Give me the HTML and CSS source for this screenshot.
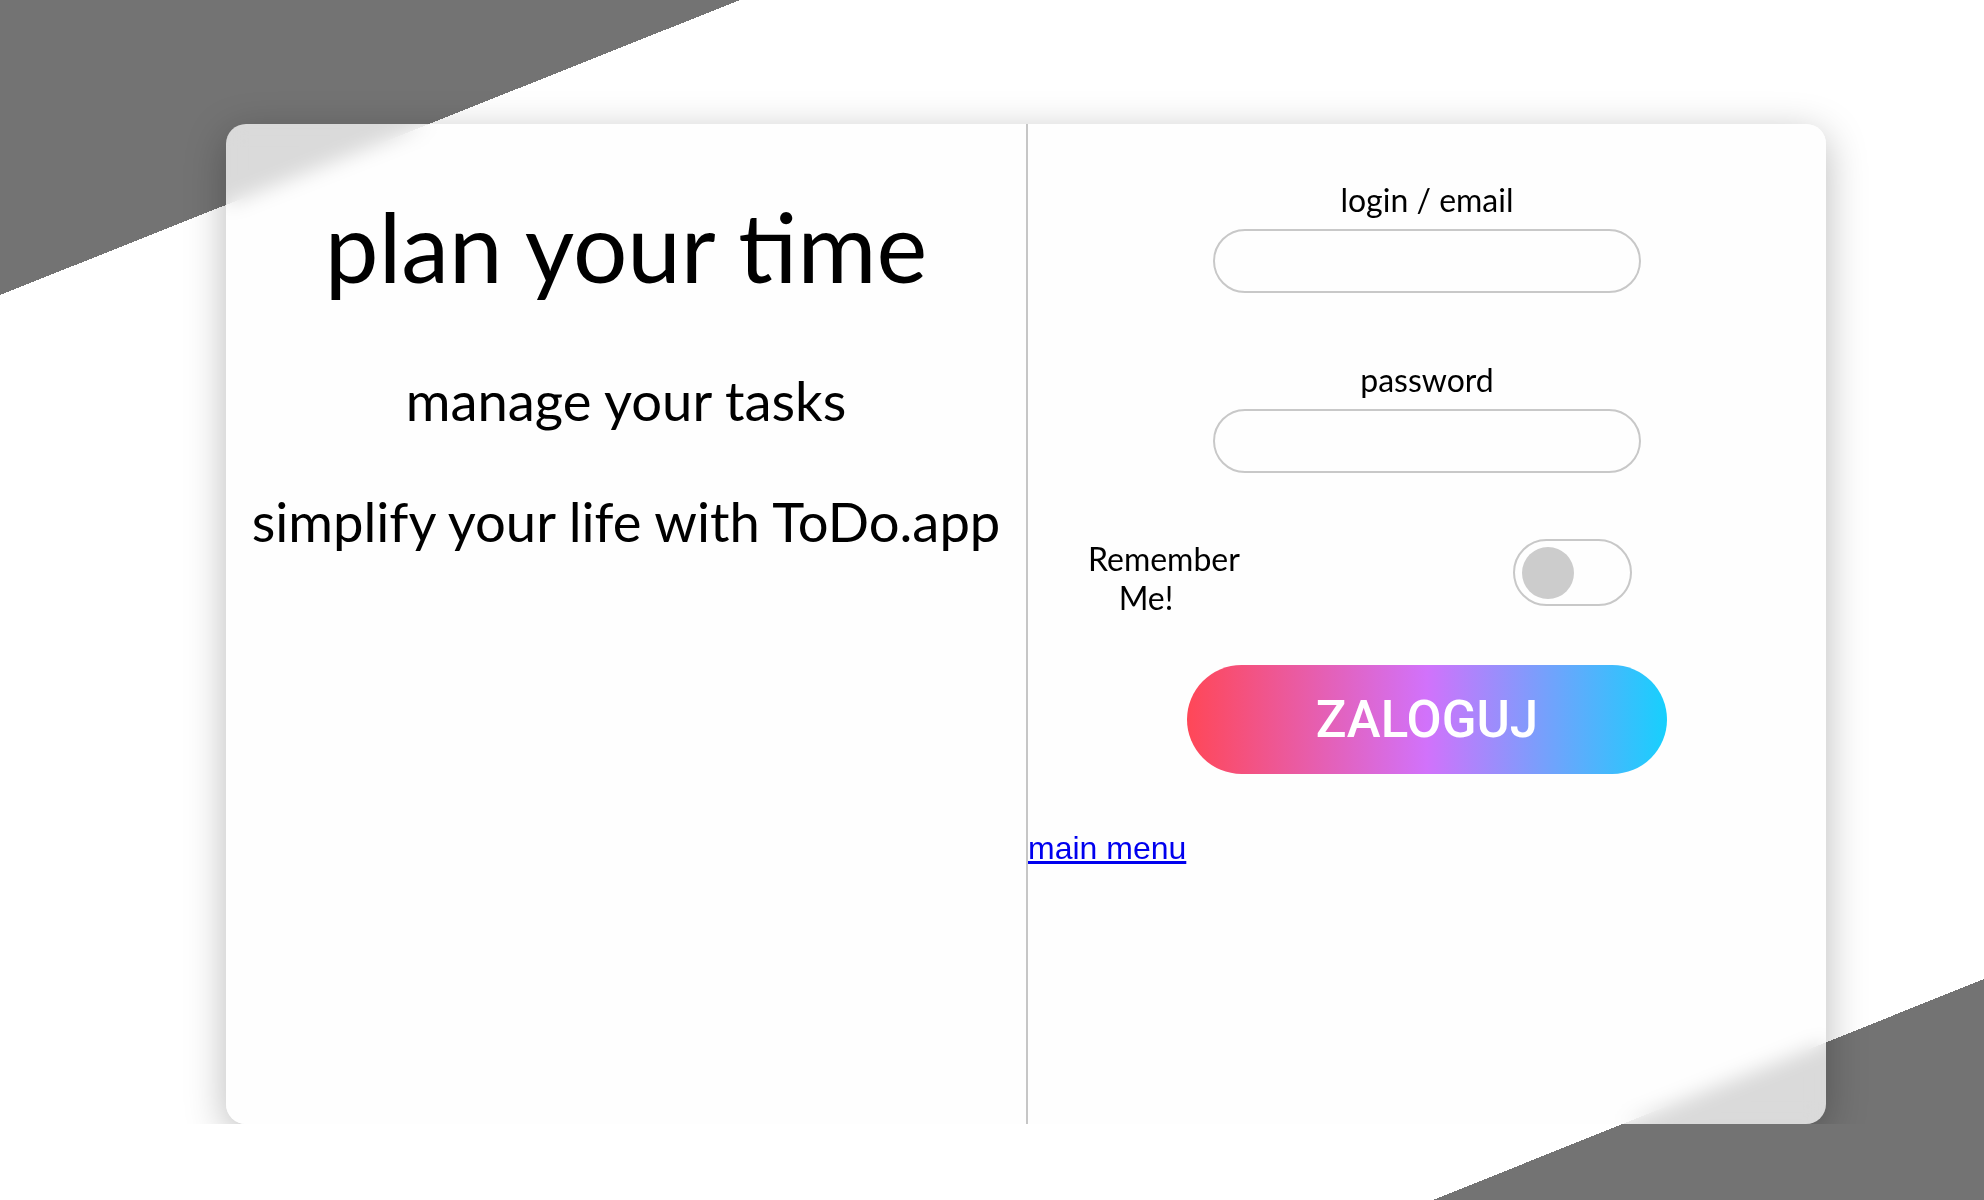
FILE: index.html
```html
<!DOCTYPE html>
<html lang="pl">
<head>
<meta charset="utf-8">
<title>ToDo.app – logowanie</title>
<link rel="stylesheet" href="styles.css">
</head>
<body>
<main class="card">
  <section class="intro">
    <h1 class="title">plan your time</h1>
    <p class="tagline">manage your tasks</p>
    <p class="tagline">simplify your life with ToDo.app</p>
  </section>
  <section class="auth">
    <form class="login-form">
      <label class="field-label" for="login">login / email</label>
      <input class="field-input" id="login" type="text">
      <label class="field-label field-label--next" for="password">password</label>
      <input class="field-input" id="password" type="password">
      <div class="remember-row">
        <span class="remember-label">Remember Me!</span>
        <span class="toggle"><span class="knob"></span></span>
      </div>
      <button class="submit" type="button">ZALOGUJ</button>
    </form>
    <a class="menu-link" href="#">main menu</a>
  </section>
</main>
</body>
</html>
```

FILE: styles.css
```css
html {
  height: 100%;
  background:
    linear-gradient(to bottom right, #737373 50%, rgba(115,115,115,0) 50%) left top / 740px 295px no-repeat,
    linear-gradient(to top left, #737373 50%, rgba(115,115,115,0) 50%) right bottom / 551px 221px no-repeat,
    #ffffff;
}

body {
  margin: 0;
  padding: 124px 0 0 226px;
  font-family: "Lato", "Noto Sans", sans-serif;
  color: #000;
}

.card {
  width: 1600px;
  height: 1000px;
  display: flex;
  border-radius: 20px;
  background: rgba(254, 254, 254, 0.74);
  -webkit-backdrop-filter: blur(10px);
  backdrop-filter: blur(10px);
  box-shadow: 0 10px 40px rgba(0, 0, 0, 0.28);
  overflow: hidden;
}

.intro {
  width: 800px;
  flex: none;
  text-align: center;
}

.title {
  margin: 64px 0;
  font-size: 96px;
  font-weight: 400;
  line-height: normal;
}

.tagline {
  margin: 55px 0;
  font-size: 54.4px;
  line-height: normal;
  white-space: nowrap;
}

.auth {
  width: 800px;
  flex: none;
  border-left: 2px solid #c6c6c6;
  display: flex;
  flex-direction: column;
}

.login-form {
  display: flex;
  flex-direction: column;
  align-items: center;
  padding-top: 56px;
  margin: 0 0 0 -2px;
}

.field-label {
  font-size: 32px;
  line-height: normal;
  margin-bottom: 10px;
}

.field-label--next {
  margin-top: 67px;
}

.field-input {
  box-sizing: border-box;
  width: 428px;
  height: 64px;
  border: 2px solid #c8c8c8;
  border-radius: 32px;
  background: rgba(255, 255, 255, 0.6);
  padding: 0 24px;
  font: 24px "Lato", sans-serif;
  outline: none;
}

.remember-row {
  align-self: stretch;
  display: flex;
  align-items: flex-start;
  margin-top: 66px;
  padding-left: 62px;
}

.remember-label {
  width: 116px;
  flex: none;
  text-align: center;
  font-size: 32px;
  line-height: normal;
}

.toggle {
  box-sizing: border-box;
  width: 119px;
  height: 67px;
  margin-left: 309px;
  border: 2px solid #c8c8c8;
  border-radius: 34px;
  display: flex;
  align-items: center;
  padding-left: 7px;
  flex: none;
}

.knob {
  width: 52px;
  height: 52px;
  border-radius: 50%;
  background: #cccccc;
}

.submit {
  margin-top: 48px;
  width: 480px;
  height: 109px;
  border: none;
  border-radius: 55px;
  background: linear-gradient(90deg, #ff4757 0%, #d172fb 50%, #17d0fd 100%);
  color: #fff;
  font-family: "Roboto", "Liberation Sans", sans-serif;
  font-weight: 500;
  font-size: 51px;
  cursor: pointer;
}

.menu-link {
  align-self: flex-start;
  margin-top: 56px;
  font-family: "Liberation Sans", Arial, sans-serif;
  font-size: 32px;
  color: #0000ee;
  text-decoration: underline;
}
```
